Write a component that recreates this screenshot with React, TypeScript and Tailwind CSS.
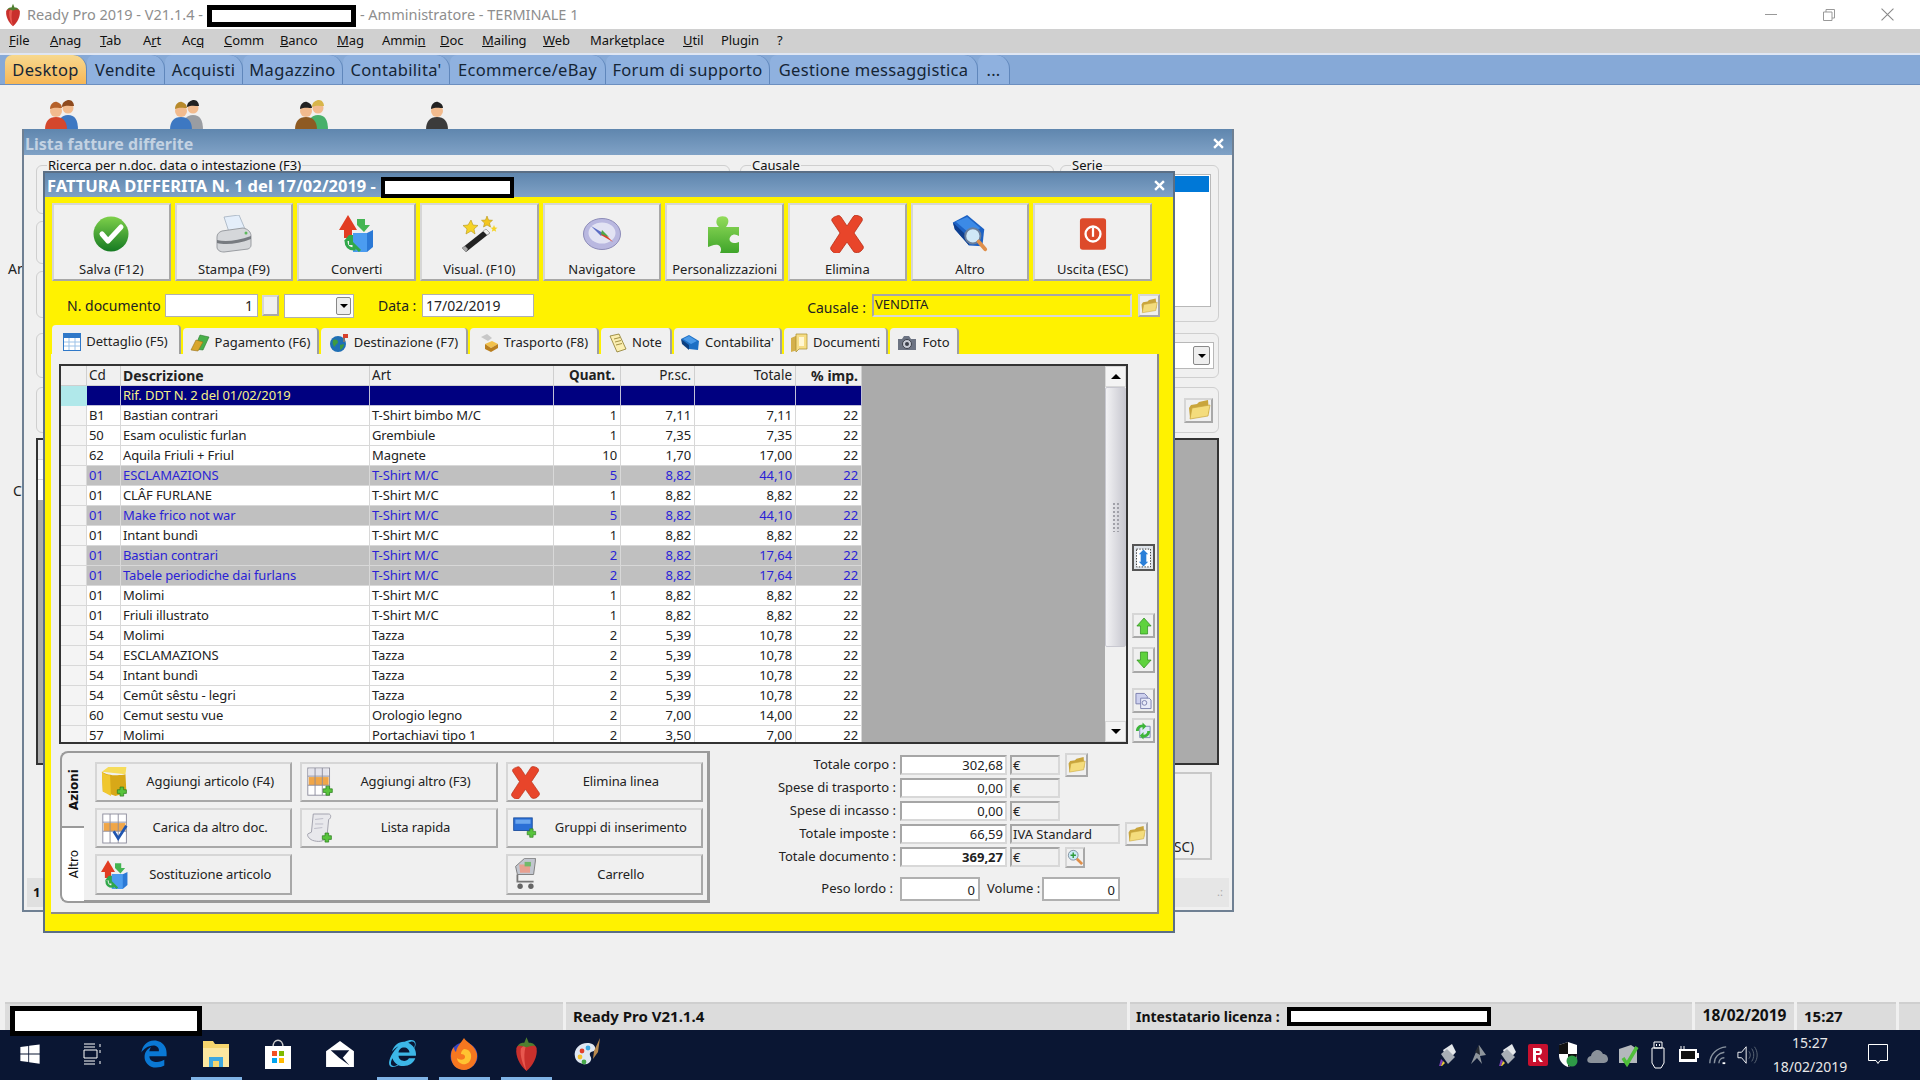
import type { ReactNode } from "react"
import { FaEdgeLegacy, FaInternetExplorer, FaWindows } from "react-icons/fa"

const raised = "border-2 border-t-[#d6d6d6] border-l-[#d6d6d6] border-r-[#a8a8a8] border-b-[#a8a8a8] bg-[#f0f0f0]"
const sunken = "border-2 border-t-[#a6a6a6] border-l-[#a6a6a6] border-r-[#d8d8d8] border-b-[#d8d8d8]"

/* ---------- icons ---------- */

function Strawberry({ className }: { className: string }) {
  return (
    <svg viewBox="0 0 24 32" className={className}>
      <path d="M12 31C6 26 2 18 3 11c.5-3 4-4 9-4s8.500 1 9 4c1 7-3 15-9 20z" fill="#c9302c" />
      <path d="M12 31C9 26 6 18 7 11c2-2 3-3 5-4-3 8-2 16 0 24z" fill="#e8584f" />
      <path d="M4 9c2-3 4-3 6-3l2-5 2 5c2 0 4 0 6 3-3-1-5 0-8 1-3-1-5-2-8-1z" fill="#4f7f2f" />
    </svg>
  )
}

function Folder({ className = "w-[24px] h-[22px]" }: { className?: string }) {
  return (
    <svg viewBox="0 0 24 22" className={className}>
      <path d="M3 19 2 9l2-3 6-1 2-2 9-2 1 13z" fill="#c9a53c" />
      <path d="M3 20 5 9l18-3-2 11z" fill="#f4dc7c" stroke="#c9a53c" strokeWidth=".7" />
    </svg>
  )
}

function PlusBadge({ x, y }: { x: number; y: number }) {
  return (
    <path
      transform={`translate(${x} ${y})`}
      d="M3 0h4v3h3v4H7v3H3V7H0V3h3z"
      fill="#58c43c"
      stroke="#2b7d1e"
      strokeWidth=".8"
    />
  )
}

function CheckCircle() {
  return (
    <svg viewBox="0 0 36 36" className="w-[36px] h-[36px]">
      <defs>
        <linearGradient id="chk" x1="0" y1="0" x2="0" y2="1">
          <stop offset="0" stopColor="#7ed04a" />
          <stop offset="1" stopColor="#157a22" />
        </linearGradient>
      </defs>
      <circle cx="18" cy="18" r="17.500" fill="url(#chk)" />
      <path d="m9 18 6 7L28 11" fill="none" stroke="#fff" strokeWidth="5" strokeLinecap="round" strokeLinejoin="round" />
    </svg>
  )
}

function Printer() {
  return (
    <svg viewBox="0 0 38 38" className="w-[38px] h-[38px]">
      <path d="M9 2 24 0l6 14-16 3z" fill="#e4eefa" stroke="#9aa8b8" strokeWidth=".7" />
      <path d="M2 22c0-3 2-5 5-6l21-3c5 1 8 4 8 8v9c0 2-1 3-3 4l-24 3c-4 0-7-2-7-5z" fill="#d5d7da" stroke="#9a9da2" />
      <path d="M2 25c8 2 20 1 34-4v3C24 29 10 30 2 28z" fill="#777b80" />
      <circle cx="31" cy="18" r="1.500" fill="#5cb85c" />
    </svg>
  )
}

function Convert({ small }: { small?: boolean }) {
  return (
    <svg viewBox="0 0 36 38" className={small ? "w-[28px] h-[30px]" : "w-[36px] h-[38px]"}>
      <path d="M9 0 18 15h-5v8H5v-8H0z" fill="#e23d22" />
      <path d="M15 30h-5v-4h-5l5-6 8 0z" fill="#31a84a" />
      <path d="M18 4h8v6h5l-6 7-7-7h0z" fill="#44b552" />
      <path d="M14 18h14l6-3v17l-6 5H14z" fill="#2b79d6" />
      <path d="M14 18h14v19H14z" fill="#4b9cf0" />
      <path d="M7 26c0 5 3 8 8 8v-4l6 6" fill="none" stroke="#30a84a" strokeWidth="3" />
    </svg>
  )
}

function Wand() {
  return (
    <svg viewBox="0 0 38 38" className="w-[38px] h-[38px]">
      <path d="M2 33 26 14l4 4L6 37z" fill="#222" />
      <path d="m23 16 3-2 4 4-3 2z" fill="#eee" stroke="#999" strokeWidth=".5" />
      <path d="M2 33l3-2 3 3-2 3z" fill="#aaa" />
      <path d="m11 5 2 5 5 .5-4 3.500 1 5-4-3-5 3 1-5-4-3.500 5-.5z" fill="#f5d327" stroke="#b5951a" strokeWidth=".6" />
      <path d="m27 1 1.500 4 4 .3-3 2.700 1 4-3.500-2-3.500 2 1-4-3-2.700 4-.3z" fill="#f3c51e" stroke="#b5951a" strokeWidth=".6" />
      <path d="m34 10 1 2.500 2.500.2-2 1.600.7 2.500-2.200-1.400-2.200 1.400.7-2.500-2-1.600 2.500-.2z" fill="#f5d327" />
    </svg>
  )
}

function Compass() {
  return (
    <svg viewBox="0 0 38 32" className="w-[38px] h-[32px]">
      <ellipse cx="19" cy="16" rx="18.500" ry="15.500" fill="#b9b8e0" stroke="#8d8cb8" />
      <ellipse cx="19" cy="15" rx="13.500" ry="10.500" fill="#e2e3f3" />
      <path d="m8 8 12 7-2 3z" fill="#5b6cc4" />
      <path d="m20 14 10 10-12-7z" fill="#d8402c" />
      <path d="m19 12 7 7-8-3z" fill="#4ea84a" />
    </svg>
  )
}

function Puzzle() {
  return (
    <svg viewBox="0 0 34 38" className="w-[34px] h-[38px]">
      <defs>
        <linearGradient id="pz" x1="0" y1="0" x2="0" y2="1">
          <stop offset="0" stopColor="#93dc5a" />
          <stop offset="1" stopColor="#3fa52a" />
        </linearGradient>
      </defs>
      <path
        d="M0 12h11c-3-3-3-5-2-8 1-3 9-4 11 0 1 3 0 5-2 8h13v9c-3-2-6-2-8 0-3 3-1 7 3 7 2 0 4-.500 5-1v9c0 1-1 2-2 2H12c2-3 1-7-2-8-4-1-8 2-10 2z"
        fill="url(#pz)"
      />
    </svg>
  )
}

function RedX({ className = "w-[34px] h-[38px]" }: { className?: string }) {
  return (
    <svg viewBox="0 0 34 38" className={className}>
      <path
        d="M7 1c2-1 3 0 4 1l6 9 6-9c1-2 3-2 6-1 3 1 4 3 3 5l-8 12 9 13c1 2 0 3-2 5s-5 2-7 1l-7-10-7 10c-1 2-4 2-7 0-2-2-3-3-2-5l9-14-8-12C1 4 3 2 7 1z"
        fill="#e8452a"
        stroke="#b92f16"
        strokeWidth=".8"
      />
    </svg>
  )
}

function BookSearch() {
  return (
    <svg viewBox="0 0 38 40" className="w-[38px] h-[38px]">
      <path d="M1 8 16 0l18 15-2 18-14-1L3 15z" fill="#1d62c4" />
      <path d="M1 8 18 24v8L3 15z" fill="#0f3f8f" />
      <path d="M4 7 16 2l14 12-12 5z" fill="#3c8ae6" />
      <circle cx="22" cy="22" r="8" fill="#cfe8f7" stroke="#6b7f9c" strokeWidth="2" />
      <path d="m28 28 7 8" stroke="#e08f4a" strokeWidth="4" strokeLinecap="round" />
    </svg>
  )
}

function PowerBtn() {
  return (
    <svg viewBox="0 0 30 36" className="w-[28px] h-[34px]">
      <rect x="1" y="1" width="28" height="34" rx="3" fill="#dd4a2a" />
      <circle cx="15" cy="18" r="8" fill="none" stroke="#fff" strokeWidth="2.500" />
      <rect x="13.800" y="11" width="2.400" height="10" fill="#fff" />
    </svg>
  )
}

function TableIcon() {
  return (
    <svg viewBox="0 0 18 18" className="w-[18px] h-[18px]">
      <rect x=".5" y=".5" width="17" height="17" fill="#fff" stroke="#2f78c8" />
      <rect x="1" y="1" width="16" height="4" fill="#2f78c8" />
      <path d="M1 9h16M1 13h16M6 5v12M12 5v12" stroke="#9cc2e8" />
    </svg>
  )
}

function MoneyIcon() {
  return (
    <svg viewBox="0 0 20 20" className="w-[20px] h-[20px]">
      <path d="M4 16 10 2l9 2-6 13z" fill="#49b04a" stroke="#2a7a2e" strokeWidth=".6" />
      <path d="M1 17 6 7l7 2-5 9z" fill="#d8a62c" stroke="#97701a" strokeWidth=".6" />
    </svg>
  )
}

function GlobeIcon() {
  return (
    <svg viewBox="0 0 20 20" className="w-[20px] h-[20px]">
      <circle cx="9" cy="11" r="8" fill="#1f6fb5" />
      <path d="M4 7c3-1 5 0 5 2s-3 2-3 5c-2-1-3-4-2-7zM11 12l4-1c0 3-2 5-4 6z" fill="#3e9a42" />
      <path d="M14 1h2v8h-2z" fill="#777" />
      <path d="M14 1h5v4h-5z" fill="#d8402c" />
    </svg>
  )
}

function ParcelIcon() {
  return (
    <svg viewBox="0 0 20 20" className="w-[20px] h-[20px]">
      <path d="M2 4 8 1l5 4-4 3z" fill="#c8c8c8" />
      <path d="M6 11 13 8l6 3-7 4z" fill="#f2c14a" />
      <path d="m6 11 6 4v4l-6-3zM12 15l7-4v4l-7 4z" fill="#b97e1e" />
    </svg>
  )
}

function NoteIcon() {
  return (
    <svg viewBox="0 0 18 20" className="w-[18px] h-[20px]">
      <path d="M1 3 10 1l7 15-9 3z" fill="#fbeeb0" stroke="#8c7a2a" strokeWidth=".8" />
      <path d="m5 6 6-1.500M6 9l6-1.500M7 12l6-1.500" stroke="#8c7a2a" strokeWidth=".8" />
    </svg>
  )
}

function BookIcon() {
  return (
    <svg viewBox="0 0 20 18" className="w-[20px] h-[18px]">
      <path d="M1 5 9 1l10 6-1 9-9-1z" fill="#1c6fc4" />
      <path d="M1 5 9 11v5L2 10z" fill="#0c3f80" />
      <path d="m3 5 6-3 8 5-6 3z" fill="#4a9ae8" />
    </svg>
  )
}

function DocsIcon() {
  return (
    <svg viewBox="0 0 18 20" className="w-[18px] h-[20px]">
      <path d="M1 5 8 2v15l-7 2z" fill="#d4b04a" />
      <path d="M6 1h11v15H9l-3 3z" fill="#f6dd85" stroke="#a68a2a" strokeWidth=".7" />
      <path d="M9 4h5v9H9z" fill="#fff7d4" />
    </svg>
  )
}

function CameraIcon() {
  return (
    <svg viewBox="0 0 20 18" className="w-[20px] h-[18px]">
      <path d="M1 5h4l2-3h5l2 3h5v11H1z" fill="#6c7382" />
      <circle cx="10" cy="10" r="4.500" fill="#c8ccd6" stroke="#3c404a" />
      <circle cx="10" cy="10" r="2" fill="#3c404a" />
    </svg>
  )
}

function BoxPlus() {
  return (
    <svg viewBox="0 0 32 36" className="w-[29px] h-[33px]">
      <path d="M1 6 8 1l20 0-1 8z" fill="#f6dc5a" />
      <path d="M1 6c5 4 18 5 26 3l1 20-12 4-14-5z" fill="#d8a818" />
      <path d="M1 6c3 3 6 4 9 4l1 23-9-5z" fill="#f0c72e" />
      <PlusBadge x={18} y={23} />
    </svg>
  )
}

function GridPlus() {
  return (
    <svg viewBox="0 0 32 36" className="w-[29px] h-[33px]">
      <rect x="2" y="2" width="24" height="30" fill="#fff" stroke="#8a8a9a" />
      <rect x="3" y="3" width="22" height="8" fill="#e4e4ec" />
      <rect x="3" y="12" width="22" height="9" fill="#f0a648" />
      <path d="M10 2v30M18 2v30M2 11h24M2 21h24" stroke="#8a8a9a" />
      <PlusBadge x={19} y={22} />
    </svg>
  )
}

function GridCheck() {
  return (
    <svg viewBox="0 0 32 36" className="w-[29px] h-[33px]">
      <rect x="2" y="2" width="26" height="32" fill="#fff" stroke="#8a8a9a" />
      <rect x="3" y="12" width="24" height="9" fill="#f0a648" />
      <path d="M10 2v32M19 2v32M2 11h26M2 21h26" stroke="#8a8a9a" />
      <path d="m14 21 5 8 9-14" fill="none" stroke="#1f55b0" strokeWidth="3" />
    </svg>
  )
}

function ScrollPlus() {
  return (
    <svg viewBox="0 0 32 36" className="w-[29px] h-[33px]">
      <path d="M8 2h17c3 0 3 5 0 6l-2 20c-4 5-10 5-16 3-4-2-6-5-5-7l4-2z" fill="#e8e8ec" stroke="#9c9ca8" />
      <path d="m10 8 9-1M10 13h9M9 18l9-1" stroke="#b8b8c4" />
      <PlusBadge x={18} y={23} />
    </svg>
  )
}

function BluePlus() {
  return (
    <svg viewBox="0 0 32 28" className="w-[27px] h-[24px]">
      <rect x="2" y="2" width="22" height="15" fill="#2b6fd6" stroke="#174a9a" />
      <rect x="4" y="4" width="18" height="5" fill="#6ba6ee" />
      <PlusBadge x={18} y={15} />
    </svg>
  )
}

function Cart() {
  return (
    <svg viewBox="0 0 30 36" className="w-[27px] h-[33px]">
      <path d="M14 0h12v3l-2 15H6L4 9z" fill="#c2c6cf" stroke="#777" />
      <path d="M8 7h12v9H9z" fill="#e8a090" />
      <path d="M14 4h7v5h-7z" fill="#71b96a" />
      <path d="M6 18v8h18" fill="none" stroke="#777" strokeWidth="2" />
      <circle cx="9" cy="31" r="3" fill="#666" />
      <circle cx="21" cy="31" r="3" fill="#666" />
    </svg>
  )
}

function ArrowV({ up }: { up?: boolean }) {
  return (
    <svg viewBox="0 0 18 20" className={up ? "w-[16px] h-[18px]" : "w-[16px] h-[18px] rotate-180"}>
      <path d="M9 1 17 10h-4v9H5v-9H1z" fill="#5fd23e" stroke="#2d8c1e" strokeWidth=".8" />
    </svg>
  )
}

/* ---------- window parts ---------- */

function Redact({ className }: { className: string }) {
  return <div className={`shrink-0 bg-white border-black ${className}`} />
}

function GroupBox({ label, className, children }: { label?: string; className: string; children?: ReactNode }) {
  return (
    <div className={`rounded-[6px] border border-[#cfcfcf] ${className}`}>
      {label && <div className="-mt-[8px] ml-[10px] w-fit bg-[#f0f0f0] px-[1px] text-[13px] leading-[14px] text-[#111]">{label}</div>}
      {children}
    </div>
  )
}

function CloseX() {
  return (
    <svg viewBox="0 0 10 10" className="h-[11px] w-[11px]">
      <path d="m1 1 8 8M9 1 1 9" stroke="#fff" strokeWidth="2.200" />
    </svg>
  )
}

const toolbar: { label: string; icon: ReactNode }[] = [
  { label: "Salva (F12)", icon: <CheckCircle /> },
  { label: "Stampa (F9)", icon: <Printer /> },
  { label: "Converti", icon: <Convert /> },
  { label: "Visual. (F10)", icon: <Wand /> },
  { label: "Navigatore", icon: <Compass /> },
  { label: "Personalizzazioni", icon: <Puzzle /> },
  { label: "Elimina", icon: <RedX /> },
  { label: "Altro", icon: <BookSearch /> },
  { label: "Uscita (ESC)", icon: <PowerBtn /> },
]

const docTabs: { label: string; w: string; icon: ReactNode; active?: boolean }[] = [
  { label: "Dettaglio (F5)", w: "w-[129px]", icon: <TableIcon />, active: true },
  { label: "Pagamento (F6)", w: "w-[136px]", icon: <MoneyIcon /> },
  { label: "Destinazione (F7)", w: "w-[147px]", icon: <GlobeIcon /> },
  { label: "Trasporto (F8)", w: "w-[129px]", icon: <ParcelIcon /> },
  { label: "Note", w: "w-[71px]", icon: <NoteIcon /> },
  { label: "Contabilita'", w: "w-[108px]", icon: <BookIcon /> },
  { label: "Documenti", w: "w-[104px]", icon: <DocsIcon /> },
  { label: "Foto", w: "w-[69px]", icon: <CameraIcon /> },
]

type Row = [string, string, string, string, string, string, string, 0 | 1]

const rows: Row[] = [
  ["B1", "Bastian contrari", "T-Shirt bimbo M/C", "1", "7,11", "7,11", "22", 0],
  ["50", "Esam oculistic furlan", "Grembiule", "1", "7,35", "7,35", "22", 0],
  ["62", "Aquila Friuli + Friul", "Magnete", "10", "1,70", "17,00", "22", 0],
  ["01", "ESCLAMAZIONS", "T-Shirt M/C", "5", "8,82", "44,10", "22", 1],
  ["01", "CLÂF FURLANE", "T-Shirt M/C", "1", "8,82", "8,82", "22", 0],
  ["01", "Make frico not war", "T-Shirt M/C", "5", "8,82", "44,10", "22", 1],
  ["01", "Intant bundì", "T-Shirt M/C", "1", "8,82", "8,82", "22", 0],
  ["01", "Bastian contrari", "T-Shirt M/C", "2", "8,82", "17,64", "22", 1],
  ["01", "Tabele periodiche dai furlans", "T-Shirt M/C", "2", "8,82", "17,64", "22", 1],
  ["01", "Molimi", "T-Shirt M/C", "1", "8,82", "8,82", "22", 0],
  ["01", "Friuli illustrato", "T-Shirt M/C", "1", "8,82", "8,82", "22", 0],
  ["54", "Molimi", "Tazza", "2", "5,39", "10,78", "22", 0],
  ["54", "ESCLAMAZIONS", "Tazza", "2", "5,39", "10,78", "22", 0],
  ["54", "Intant bundì", "Tazza", "2", "5,39", "10,78", "22", 0],
  ["54", "Cemût sêstu - legri", "Tazza", "2", "5,39", "10,78", "22", 0],
  ["60", "Cemut sestu vue", "Orologio legno", "2", "7,00", "14,00", "22", 0],
  ["57", "Molimi", "Portachiavi tipo 1", "2", "3,50", "7,00", "22", 0],
]

const cols = "grid h-[20px] grid-cols-[26px_34px_249px_184px_67px_74px_101px_66px] leading-[19px]"
const bodyText = "text-[13px] tracking-[-0.1px]"

function Cell({ children, right, className = "" }: { children?: ReactNode; right?: boolean; className?: string }) {
  return (
    <div className={`overflow-hidden whitespace-nowrap border-b border-r pl-[2px] pr-[3px] ${right ? "text-right" : ""} ${className}`}>
      {children}
    </div>
  )
}

function Grid() {
  return (
    <div className="flex h-[380px] w-[1069px] overflow-hidden border-2 border-[#333] bg-[#ababab]">
      <div className="w-[801px] shrink-0">
        <div className={`${cols} bg-[#f0f0f0] text-[13.500px] text-[#222]`}>
          <Cell className="border-[#cfcfcf]" />
          <Cell className="border-[#cfcfcf]">Cd</Cell>
          <Cell className="border-[#cfcfcf] text-[14px] font-bold">Descrizione</Cell>
          <Cell className="border-[#cfcfcf]">Art</Cell>
          <Cell right className="border-[#cfcfcf] pr-[5px] font-bold">Quant.</Cell>
          <Cell right className="border-[#cfcfcf]">Pr.sc.</Cell>
          <Cell right className="border-[#cfcfcf]">Totale</Cell>
          <Cell right className="border-[#cfcfcf] text-[14px] font-bold">% imp.</Cell>
        </div>
        <div className={`${cols} ${bodyText} bg-[#000080] text-[#f6f08a]`}>
          <Cell className="border-[#b0e8ea] bg-[#b0e8ea]" />
          <Cell className="border-[#c0c0d8]" />
          <Cell className="border-[#c0c0d8]">Rif. DDT N. 2 del 01/02/2019</Cell>
          <Cell className="border-[#c0c0d8]" />
          <Cell className="border-[#c0c0d8]" />
          <Cell className="border-[#c0c0d8]" />
          <Cell className="border-[#c0c0d8]" />
          <Cell className="border-[#c0c0d8]" />
        </div>
        {rows.map((r, i) => (
          <div key={i} className={`${cols} ${bodyText} ${r[7] ? "bg-[#c0c0c0] text-[#2a1fd6]" : "bg-white text-[#222]"}`}>
            <Cell className="border-[#d8d8d8] bg-[#f4f4f4]" />
            <Cell className="border-[#d8d8d8]">{r[0]}</Cell>
            <Cell className="border-[#d8d8d8]">{r[1]}</Cell>
            <Cell className="border-[#d8d8d8]">{r[2]}</Cell>
            <Cell right className="border-[#d8d8d8]">{r[3]}</Cell>
            <Cell right className="border-[#d8d8d8]">{r[4]}</Cell>
            <Cell right className="border-[#d8d8d8]">{r[5]}</Cell>
            <Cell right className="border-[#d8d8d8]">{r[6]}</Cell>
          </div>
        ))}
      </div>
      <div className="flex-1" />
      <div className="flex w-[21px] shrink-0 flex-col bg-[#f0f0f0]">
        <div className="flex h-[21px] items-center justify-center border border-[#d8d8d8] bg-[#f4f4f4]">
          <div className="h-0 w-0 border-x-[5px] border-b-[5px] border-x-transparent border-b-black" />
        </div>
        <div className="flex h-[260px] flex-col items-center justify-center rounded-[2px] border border-[#c8c8d0] bg-gradient-to-r from-[#f2f2f4] to-[#c8c8d0]">
          <div className="h-[30px] w-[8px] bg-[radial-gradient(#a0a0a8_1px,transparent_1px)] bg-[length:4px_4px]" />
        </div>
        <div className="flex-1" />
        <div className="flex h-[21px] items-center justify-center border border-[#d8d8d8] bg-[#f4f4f4]">
          <div className="h-0 w-0 border-x-[5px] border-t-[5px] border-x-transparent border-t-black" />
        </div>
      </div>
    </div>
  )
}

function SideBtn({ className, children }: { className: string; children: ReactNode }) {
  return <div className={`flex w-[23px] items-center justify-center ${className}`}>{children}</div>
}

function SideButtons() {
  return (
    <div className="ml-[4px] flex flex-col">
      <SideBtn className="mt-[180px] h-[27px] border-2 border-[#555] bg-[#dfe4ea]">
        <svg viewBox="0 0 16 20" className="h-[20px] w-[15px]">
          <rect x=".5" y=".5" width="15" height="19" fill="#fff" stroke="#333" strokeDasharray="1.500 1.500" />
          <path d="M8 1 13 6h-2v8h2l-5 5-5-5h2V6H3z" fill="#2a7fd8" />
        </svg>
      </SideBtn>
      <SideBtn className={`mt-[42px] h-[25px] ${raised}`}><ArrowV up /></SideBtn>
      <SideBtn className={`mt-[9px] h-[26px] ${raised}`}><ArrowV /></SideBtn>
      <SideBtn className={`mt-[15px] h-[25px] ${raised}`}>
        <svg viewBox="0 0 18 18" className="h-[18px] w-[17px]">
          <path d="M1 1h9l3 3v8H1z" fill="#cdd0ee" stroke="#7a7fae" />
          <path d="M6 6h9l2 2v9H6z" fill="#e9ebf8" stroke="#7a7fae" />
          <circle cx="10" cy="11" r="2.500" fill="none" stroke="#7a7fae" />
        </svg>
      </SideBtn>
      <SideBtn className={`mt-[5px] h-[25px] ${raised}`}>
        <svg viewBox="0 0 18 18" className="h-[18px] w-[17px]">
          <path d="M5 4h11v12H5z" fill="#dfe8f8" stroke="#7a8ab0" />
          <path d="M1 9c0-4 3-7 7-7V0l4 4-4 4V5C5 5 4 7 4 9z" fill="#3cb53a" />
          <path d="M16 9c0 4-3 7-7 7v2l-4-4 4-4v3c3 0 4-2 4-4z" fill="#3cb53a" />
        </svg>
      </SideBtn>
    </div>
  )
}

const actions: { label: string; icon: ReactNode }[] = [
  { label: "Aggiungi articolo (F4)", icon: <BoxPlus /> },
  { label: "Aggiungi altro (F3)", icon: <GridPlus /> },
  { label: "Elimina linea", icon: <RedX className="h-[33px] w-[29px]" /> },
  { label: "Carica da altro doc.", icon: <GridCheck /> },
  { label: "Lista rapida", icon: <ScrollPlus /> },
  { label: "Gruppi di inserimento", icon: <BluePlus /> },
  { label: "Sostituzione articolo", icon: <Convert small /> },
  { label: "", icon: null },
  { label: "Carrello", icon: <Cart /> },
]

function ActionPanel() {
  return (
    <div className="flex h-[152px] w-[650px] shrink-0">
      <div className="flex w-[24px] shrink-0 flex-col font-['DejaVu_Sans',sans-serif] text-[12px] text-[#111]">
        <div className="flex h-[75px] items-center justify-center rounded-tl-[8px] border-l-2 border-t-2 border-[#9a9a9a] bg-[#f0f0f0] pl-[2px] font-bold [writing-mode:vertical-rl]">
          <span className="rotate-180">Azioni</span>
        </div>
        <div className="flex h-[77px] items-center justify-center rounded-bl-[8px] border-2 border-r-0 border-[#9a9a9a] bg-white pl-[2px] [writing-mode:vertical-rl]">
          <span className="rotate-180">Altro</span>
        </div>
      </div>
      <div className="flex-1 border-b-[3px] border-r-[3px] border-t-2 border-[#9a9a9a] pl-[11px] pt-[9px]">
        <div className="grid w-[608px] grid-cols-3 grid-rows-[40px_40px_41px] gap-x-[8px] gap-y-[6px]">
          {actions.map((a, i) =>
            a.label ? (
              <div key={i} className={`flex items-center pl-[3px] text-[13px] tracking-[-0.1px] text-[#222] ${raised}`}>
                <div className="flex w-[30px] shrink-0 justify-center">{a.icon}</div>
                <div className="flex-1 text-center">{a.label}</div>
              </div>
            ) : (
              <div key={i} />
            ),
          )}
        </div>
      </div>
    </div>
  )
}

function TotalRow({ label, value, unit, bold, wide, className, children }: {
  label: string
  value: string
  unit: string
  bold?: boolean
  wide?: boolean
  className: string
  children?: ReactNode
}) {
  return (
    <div className={`flex h-[20px] items-center text-[13px] text-[#222] ${className}`}>
      <div className="w-[186px] text-right">{label}</div>
      <div className={`ml-[4px] h-[20px] w-[107px] bg-white pr-[2px] text-right leading-[16px] ${sunken} ${bold ? "font-bold" : ""}`}>{value}</div>
      <div className={`ml-[3px] h-[20px] ${wide ? "w-[110px]" : "w-[50px]"} pl-[1px] leading-[16px] ${sunken}`}>{unit}</div>
      {children}
    </div>
  )
}

function Totals() {
  return (
    <div className="flex flex-col pt-[4px]">
      <TotalRow label="Totale corpo :" value="302,68" unit="€" className="">
        <div className={`ml-[5px] flex h-[24px] w-[23px] items-center justify-center ${raised}`}><Folder /></div>
      </TotalRow>
      <TotalRow label="Spese di trasporto :" value="0,00" unit="€" className="mt-[3px]" />
      <TotalRow label="Spese di incasso :" value="0,00" unit="€" className="mt-[3px]" />
      <TotalRow label="Totale imposte :" value="66,59" unit="IVA Standard" wide className="mt-[3px]">
        <div className={`ml-[5px] flex h-[24px] w-[23px] items-center justify-center ${raised}`}><Folder /></div>
      </TotalRow>
      <TotalRow label="Totale documento :" value="369,27" unit="€" bold className="mt-[3px]">
        <div className={`ml-[5px] flex h-[21px] w-[20px] items-center justify-center ${raised}`}>
          <svg viewBox="0 0 18 18" className="h-[16px] w-[16px]">
            <circle cx="7" cy="7" r="5.500" fill="#cdeaf6" stroke="#7b8a9a" />
            <path d="M7 4v6M4 7h6" stroke="#2f9a3a" strokeWidth="1.600" />
            <path d="m11 11 6 6" stroke="#e08f4a" strokeWidth="3" />
          </svg>
        </div>
      </TotalRow>
      <div className="mt-[10px] flex h-[24px] items-center text-[13px] text-[#222]">
        <div className="w-[183px] text-right">Peso lordo :</div>
        <div className="ml-[7px] h-[24px] w-[80px] border-2 border-[#b0b0b0] bg-white pr-[3px] text-right leading-[22px]">0</div>
        <div className="ml-[7px] w-[52px] whitespace-nowrap">Volume :</div>
        <div className="ml-[3px] h-[24px] w-[78px] border-2 border-[#b0b0b0] bg-white pr-[3px] text-right leading-[22px]">0</div>
      </div>
    </div>
  )
}

function InvoiceWindow() {
  return (
    <div className="absolute left-[43px] top-[86px] flex h-[762px] w-[1132px] flex-col border-2 border-[#5b6f85] bg-[#fff200]">
      <div className="flex h-[24px] shrink-0 items-center justify-between bg-gradient-to-b from-[#5f86ae] to-[#80a2c6] pr-[8px]">
        <div className="flex items-center">
          <div className="whitespace-nowrap pl-[2px] pt-[3px] text-[16.500px] font-bold text-white">FATTURA DIFFERITA N. 1 del 17/02/2019 -</div>
          <Redact className="ml-[5px] mt-[4px] h-[21px] w-[133px] border-[4px]" />
        </div>
        <CloseX />
      </div>

      <div className="flex flex-1 flex-col pl-[7px] pt-[6px]">
        {/* Toolbar */}
        <div className="grid h-[78px] w-[1100px] shrink-0 grid-cols-9 gap-x-[4px]">
          {toolbar.map((b) => (
            <div key={b.label} className={`flex flex-col items-center text-[13px] text-[#222] ${raised}`}>
              <div className="flex h-[49px] items-center justify-center pt-[8px]">{b.icon}</div>
              <div className="mt-[7px] whitespace-nowrap leading-[16px]">{b.label}</div>
            </div>
          ))}
        </div>

        {/* Document row */}
        <div className="mt-[13px] flex h-[23px] w-[1108px] shrink-0 items-center text-[14px] text-[#222]">
          <div className="ml-[15px] w-[98px] whitespace-nowrap">N. documento :</div>
          <div className="h-[23px] w-[93px] border border-[#b0b0b0] bg-white pr-[4px] text-right leading-[21px]">1</div>
          <div className={`ml-[4px] h-[21px] w-[17px] ${raised}`} />
          <div className="ml-[5px] flex h-[24px] w-[70px] items-center justify-end border border-[#b0b0b0] bg-white pr-[2px]">
            <div className="flex h-[18px] w-[15px] items-center justify-center rounded-[2px] border border-[#888] bg-[#eee]">
              <div className="h-0 w-0 border-x-[4px] border-t-[4px] border-x-transparent border-t-black" />
            </div>
          </div>
          <div className="ml-[24px] w-[44px] whitespace-nowrap">Data :</div>
          <div className="h-[23px] w-[112px] border border-[#b0b0b0] bg-white pl-[3px] leading-[21px]">17/02/2019</div>
          <div className="ml-auto mt-[3px] whitespace-nowrap">Causale :</div>
          <div className={`ml-[6px] h-[23px] w-[260px] pl-[1px] text-[13px] leading-[17px] ${sunken}`}>VENDITA</div>
          <div className={`ml-[6px] flex h-[23px] w-[22px] items-center justify-center ${raised}`}><Folder /></div>
        </div>

        {/* Tabs */}
        <div className="mt-[8px] flex h-[29px] shrink-0 items-end gap-x-[2px]">
          {docTabs.map((t) => (
            <div
              key={t.label}
              className={`flex items-center justify-center gap-x-[5px] whitespace-nowrap rounded-t-[4px] border-r-2 border-[#a0a0a0] bg-[#f0f0f0] text-[13px] text-[#222] ${t.w} ${t.active ? "h-[29px] pt-[5px]" : "h-[26px] pt-[3px]"}`}
            >
              {t.icon}
              {t.label}
            </div>
          ))}
        </div>

        {/* Tab panel */}
        <div className="-ml-[1px] flex h-[560px] w-[1108px] shrink-0 flex-col border-b-2 border-r-2 border-[#8c8c8c] bg-[#f0f0f0] pl-[8px] pt-[10px]">
          <div className="flex">
            <Grid />
            <SideButtons />
          </div>
          <div className="mt-[7px] flex">
            <div className="ml-[1px]"><ActionPanel /></div>
            <Totals />
          </div>
        </div>
      </div>
    </div>
  )
}

function ListWindow() {
  return (
    <div className="absolute left-[22px] top-[44px] flex h-[783px] w-[1212px] flex-col border-2 border-t-0 border-[#6f8093] bg-[#f0f0f0]">
      <div className="flex h-[26px] shrink-0 items-center justify-between bg-gradient-to-b from-[#5f86ae] to-[#80a2c6] pl-[1px] pr-[8px] pt-[3px]">
        <div className="text-[16px] font-bold text-[#c3d2e2]">Lista fatture differite</div>
        <CloseX />
      </div>
      <div className="flex flex-1 flex-col pl-[12px] pr-[13px] pt-[10px]">
        <div className="flex h-[157px] shrink-0">
          <div className="flex w-[694px] flex-col gap-y-[7px]">
            <GroupBox label="Ricerca per n.doc. data o intestazione (F3)" className="h-[49px]" />
            <GroupBox className="h-[43px]" />
            <GroupBox className="h-[47px]" />
          </div>
          <GroupBox label="Causale" className="ml-[10px] w-[314px]" />
          <GroupBox label="Serie" className="ml-[6px] flex-1">
            <div className="ml-[8px] mr-[7px] mt-[2px] h-[133px] border border-[#b8b8b8] bg-white p-[1px]">
              <div className="h-[16px] bg-[#0078d7]" />
            </div>
          </GroupBox>
        </div>
        <GroupBox className="mt-[11px] flex h-[45px] shrink-0 items-center justify-end pr-[4px]">
          <div className="flex h-[27px] w-[48px] items-center justify-end border border-[#b8b8b8] bg-white pr-[3px]">
            <div className="flex h-[19px] w-[17px] items-center justify-center rounded-[2px] border border-[#888] bg-[#eee]">
              <div className="h-0 w-0 border-x-[4px] border-t-[4px] border-x-transparent border-t-black" />
            </div>
          </div>
        </GroupBox>
        <GroupBox className="mt-[9px] flex h-[46px] shrink-0 items-center justify-end pr-[5px]">
          <div className={`flex h-[25px] w-[29px] items-center justify-center ${raised}`}><Folder /></div>
        </GroupBox>
        <div className="mt-[5px] h-[327px] shrink-0 border-2 border-[#333] bg-[#ababab]">
          <div className="h-[20px] w-[100px] border-b border-[#d8d8d8] bg-[#f0f0f0]" />
          <div className="h-[20px] w-[100px] border-b border-[#d8d8d8] bg-white" />
          <div className="h-[20px] w-[100px] bg-white" />
        </div>
        <div className="ml-auto mr-[7px] mt-[7px] flex h-[88px] w-[140px] shrink-0 items-end justify-end border-2 border-[#c8c8c8] pb-[1px] pr-[16px] text-[13.500px] text-[#222]">
          Uscita (ESC)
        </div>
      </div>
      <div className="mb-[3px] flex h-[29px] shrink-0 items-center justify-between pl-[3px] pr-[3px]">
        <div className="flex h-[29px] w-[60px] items-center bg-[#e0e0e0] pl-[6px] text-[13px] font-bold text-[#111]">1</div>
        <div className="flex h-[29px] w-[60px] items-center justify-end bg-[#e6e6e6] pr-[6px] text-[11px] text-[#aaa]">.:</div>
      </div>
    </div>
  )
}

/* ---------- app frame ---------- */

const menu: { label: string; u: number; w: string }[] = [
  { label: "File", u: 0, w: "w-[41px]" },
  { label: "Anag", u: 0, w: "w-[50px]" },
  { label: "Tab", u: 0, w: "w-[43px]" },
  { label: "Art", u: 1, w: "w-[39px]" },
  { label: "Acq", u: 2, w: "w-[42px]" },
  { label: "Comm", u: 0, w: "w-[56px]" },
  { label: "Banco", u: 0, w: "w-[57px]" },
  { label: "Mag", u: 0, w: "w-[45px]" },
  { label: "Ammin", u: 4, w: "w-[58px]" },
  { label: "Doc", u: 0, w: "w-[42px]" },
  { label: "Mailing", u: 0, w: "w-[61px]" },
  { label: "Web", u: 0, w: "w-[47px]" },
  { label: "Marketplace", u: 4, w: "w-[93px]" },
  { label: "Util", u: 0, w: "w-[38px]" },
  { label: "Plugin", u: -1, w: "w-[56px]" },
  { label: "?", u: -1, w: "w-[20px]" },
]

const appTabs: { label: string; w: string }[] = [
  { label: "Desktop", w: "w-[82px]" },
  { label: "Vendite", w: "w-[78px]" },
  { label: "Acquisti", w: "w-[78px]" },
  { label: "Magazzino", w: "w-[100px]" },
  { label: "Contabilita'", w: "w-[107px]" },
  { label: "Ecommerce/eBay", w: "w-[156px]" },
  { label: "Forum di supporto", w: "w-[164px]" },
  { label: "Gestione messaggistica", w: "w-[208px]" },
  { label: "...", w: "w-[32px]" },
]

function People({ front, back, hair, hair2 }: { front: string; back?: string; hair: string; hair2?: string }) {
  return (
    <svg viewBox="0 0 38 30" className="h-[30px] w-[38px]">
      {back && (
        <g>
          <circle cx="25" cy="8" r="5.500" fill="#f2bb8e" />
          <path d="M19 7c0-5 4-7 7-7s5 3 5 6c-4 0-8-1-12 1z" fill={hair2} />
          <path d="M15 30c0-10 3-15 10-15s10 5 10 15z" fill={back} />
        </g>
      )}
      <circle cx="13" cy="11" r="6" fill="#f2bb8e" />
      <path d="M7 9c0-5 4-8 7-7s5 3 5 6c-3 0-8-1-12 1z" fill={hair} />
      <path d="M2 30c0-9 4-13 11-13s11 4 11 13z" fill={front} />
    </svg>
  )
}

function TitleBar() {
  return (
    <div className="flex h-[29px] shrink-0 items-center bg-white pl-[4px] text-[14.500px] text-[#8e8e8e]">
      <Strawberry className="h-[24px] w-[18px]" />
      <div className="ml-[5px] whitespace-nowrap">Ready Pro 2019 - V21.1.4 -</div>
      <Redact className="ml-[4px] mt-[3px] h-[22px] w-[149px] border-[5px]" />
      <div className="ml-[4px] whitespace-nowrap">- Amministratore - TERMINALE 1</div>
      <div className="ml-auto flex items-center">
        <div className="mr-[46px] h-[1px] w-[12px] bg-[#999]" />
        <svg viewBox="0 0 12 12" className="mr-[46px] h-[12px] w-[12px]">
          <path d="M.5 3h8.500v8.500H.5zM3 3V.5h8.500V9H9" fill="none" stroke="#999" />
        </svg>
        <svg viewBox="0 0 12 12" className="mr-[26px] h-[13px] w-[13px]">
          <path d="m.5.5 11 11m0-11-11 11" stroke="#888" />
        </svg>
      </div>
    </div>
  )
}

function MenuBar() {
  return (
    <div className="flex h-[24px] shrink-0 items-center bg-[#d0d0d0] pl-[9px] text-[13px] tracking-[-0.1px] text-[#111]">
      {menu.map((m) => (
        <div key={m.label} className={`shrink-0 ${m.w}`}>
          {m.u < 0 ? (
            m.label
          ) : (
            <>
              {m.label.slice(0, m.u)}
              <span className="underline">{m.label[m.u]}</span>
              {m.label.slice(m.u + 1)}
            </>
          )}
        </div>
      ))}
    </div>
  )
}

function TabBar() {
  return (
    <div className="flex h-[32px] shrink-0 items-end border-b border-t-2 border-b-[#6c8fc0] border-t-[#dfe6f3] bg-[#86a9d7] pl-[5px]">
      {appTabs.map((t) => (
        <div
          key={t.label}
          className={`flex h-[29px] items-center justify-center whitespace-nowrap rounded-tl-[7px] rounded-tr-[14px] border-r border-[#5f86bb] pt-[2px] text-[16.500px] tracking-[0.3px] text-[#152535] ${t.w} ${
            t.label === "Desktop" ? "bg-gradient-to-b from-[#f7d88e] to-[#f7b755]" : "bg-[#8fb1df]"
          }`}
        >
          {t.label}
        </div>
      ))}
    </div>
  )
}

function StatusBar() {
  const seg = "flex items-center h-full border-t-2 border-[#cfcfcf] bg-[#dcdcdc] pb-[2px] font-bold text-[#111]"
  return (
    <div className="flex h-[28px] shrink-0 gap-x-[3px] bg-[#f0f0f0] pl-[5px]">
      <div className={`${seg} w-[558px]`} />
      <div className={`${seg} w-[561px] pl-[7px] text-[15px]`}>Ready Pro V21.1.4</div>
      <div className={`${seg} w-[562px] pl-[6px] text-[14px]`}>
        Intestatario licenza :
        <Redact className="ml-[7px] h-[19px] w-[204px] border-[4px]" />
      </div>
      <div className={`${seg} w-[99px] justify-center text-[15.500px]`}>18/02/2019</div>
      <div className={`${seg} w-[99px] pl-[7px] text-[15px]`}>15:27</div>
      <div className={`${seg} flex-1`} />
    </div>
  )
}

const taskIcons: { icon: ReactNode; on?: boolean }[] = [
  { icon: <FaWindows className="h-[22px] w-[22px] text-white" /> },
  {
    icon: (
      <svg viewBox="0 0 22 22" className="h-[22px] w-[22px]">
        <path d="M3 1h11M3 4h11M3 7h13v8H3zM3 18h11M3 21h11M19 1v3M19 7v3M19 18v3" fill="none" stroke="#fff" />
      </svg>
    ),
  },
  { icon: <FaEdgeLegacy className="h-[30px] w-[28px] text-[#0a78d4]" /> },
  {
    on: true,
    icon: (
      <svg viewBox="0 0 28 30" className="h-[30px] w-[28px]">
        <path d="M1 2h10l2 3h14v23H1z" fill="#f6d56e" />
        <path d="M1 9h26v19H1z" fill="#fce7a0" />
        <path d="M7 18h14v10H7z" fill="#3ea8e0" />
        <path d="M11 22h6v6h-6z" fill="#f6d56e" />
      </svg>
    ),
  },
  {
    icon: (
      <svg viewBox="0 0 28 30" className="h-[30px] w-[28px]">
        <path d="M9 8c0-9 10-9 10 0" fill="none" stroke="#ccc" strokeWidth="1.500" />
        <path d="M1 7h26v23H1z" fill="#fff" />
        <rect x="8" y="12" width="5" height="5" fill="#f25022" />
        <rect x="15" y="12" width="5" height="5" fill="#7fba00" />
        <rect x="8" y="19" width="5" height="5" fill="#00a4ef" />
        <rect x="15" y="19" width="5" height="5" fill="#ffb900" />
      </svg>
    ),
  },
  {
    icon: (
      <svg viewBox="0 0 30 28" className="h-[26px] w-[30px]">
        <path d="M0 11 15 0l15 11v17H0z" fill="#fff" />
        <path d="M5 10h20l-7 8 7 8-11-8z" fill="#0a1633" />
      </svg>
    ),
  },
  { on: true, icon: <FaInternetExplorer className="h-[27px] w-[27px] text-[#3cb6e6]" /> },
  {
    on: true,
    icon: (
      <svg viewBox="0 0 30 32" className="h-[32px] w-[30px]">
        <circle cx="15" cy="18" r="13.500" fill="#3a47c2" />
        <path d="M15 0c2 4 11 7 13 16 1 9-6 16-13 16S2 27 2 18c0-4 1-7 3-9 0 3 1 4 2 5 1-6 5-9 8-14z" fill="#f6771f" />
        <path d="M15 11c5 0 8 4 7 9s-5 7-9 6c-3-1-5-3-5-6 2 2 5 2 7 1 2-2 1-5-3-5 0-2 1-4 3-5z" fill="#ffc331" />
      </svg>
    ),
  },
  { on: true, icon: <Strawberry className="h-[38px] w-[27px]" /> },
  {
    icon: (
      <svg viewBox="0 0 30 34" className="h-[34px] w-[30px]">
        <path d="M2 20C0 11 8 5 16 6c5 1 7 4 6 7-1 2-4 1-5 3-1 3 2 4 1 7s-4 5-8 4-7-3-8-7z" fill="#dfe7f2" />
        <circle cx="9" cy="14" r="2.400" fill="#e23d2a" />
        <circle cx="15" cy="11" r="2.400" fill="#3ea8e0" />
        <circle cx="7" cy="20" r="2.400" fill="#f5c22e" />
        <circle cx="11" cy="25" r="2.400" fill="#47a84a" />
        <path d="M27 1 21 14l-1 8 5-7z" fill="#b98a4e" />
      </svg>
    ),
  },
]

function TrayPrinter() {
  return (
    <svg viewBox="0 0 20 24" className="h-[24px] w-[20px]">
      <path d="M5 7 14 1l4 8-8 9z" fill="#e4e7ea" />
      <path d="M3 11 9 6l8 8-7 7z" fill="#a8aeb6" />
      <path d="M3 16l2 2-2 5H1z" fill="#7d3fb8" />
      <path d="M5 18l2 2-3 3H3z" fill="#e8c93a" />
    </svg>
  )
}

const trayIcons: ReactNode[] = [
  <TrayPrinter key="a" />,
  <svg key="b" viewBox="0 0 20 22" className="h-[22px] w-[20px]">
    <path d="M3 20 11 1l7 10-6 1 2 8-5-6z" fill="#8e959c" />
    <path d="M11 1 7 8l5 3z" fill="#262b32" />
  </svg>,
  <TrayPrinter key="c" />,
  <svg key="d" viewBox="0 0 20 22" className="h-[22px] w-[20px]">
    <rect x="0" y="0" width="20" height="22" rx="2" fill="#c8102e" />
    <path d="M5 4h6c4 0 4 7 0 7H8v7H5zM8 7v2h3c1 0 1-2 0-2zM11 13l4 5h-3l-2-3z" fill="#fff" />
  </svg>,
  <svg key="e" viewBox="0 0 20 26" className="h-[26px] w-[20px]">
    <path d="M10 0 19 3v10c0 6-5 10-9 12C5 23 1 19 1 13V3z" fill="#fff" />
    <path d="M10 0v12H1V3zM10 12h9c0 6-5 10-9 13z" fill="#111" />
    <circle cx="14" cy="19" r="5.500" fill="#2e9a47" />
  </svg>,
  <svg key="f" viewBox="0 0 22 16" className="h-[16px] w-[22px]">
    <path d="M4 16c-5 0-5-6 0-7 1-6 9-9 12-2 6 0 7 9 1 9z" fill="#8a919a" />
  </svg>,
  <svg key="g" viewBox="0 0 22 24" className="h-[24px] w-[22px]">
    <path d="M2 6 14 2l6 4v14H2z" fill="#b4b8bc" />
    <path d="m6 15 4 6L20 4" fill="none" stroke="#4fbf3a" strokeWidth="3.500" />
  </svg>,
  <svg key="h" viewBox="0 0 14 28" className="h-[28px] w-[14px]">
    <path d="M3 1h8v6H3zM1 7h12v15l-3 5H4l-3-5z" fill="none" stroke="#fff" />
    <path d="M5 3h1v2H5zM8 3h1v2H8z" fill="#fff" />
  </svg>,
  <svg key="i" viewBox="0 0 22 20" className="h-[20px] w-[22px]">
    <path d="M4 1v3M7 1v3" stroke="#fff" />
    <rect x="2" y="4" width="18" height="13" fill="#fff" />
    <rect x="4" y="6" width="14" height="8" fill="#111" />
    <path d="M20 8h2v5h-2z" fill="#fff" />
  </svg>,
  <svg key="j" viewBox="0 0 22 22" className="h-[20px] w-[20px]">
    <path d="M2 20C2 10 10 3 20 2M7 20c0-7 5-11 11-12M12 20c0-3 2-6 6-6" fill="none" stroke="#8a94a0" strokeWidth="1.500" />
    <path d="M16 20h3" stroke="#fff" strokeWidth="2" />
  </svg>,
  <svg key="k" viewBox="0 0 24 24" className="h-[24px] w-[22px]">
    <path d="M1 9h4l5-6v18l-5-6H1z" fill="none" stroke="#fff" />
    <path d="M13 8c2 2 2 6 0 8M16 5c3 4 3 10 0 14M19 3c4 5 4 13 0 18" fill="none" stroke="#5f6a78" />
  </svg>,
]

function Taskbar() {
  return (
    <div className="relative flex h-[50px] shrink-0 bg-[#0a1633] text-[14px] text-[#e8e8e8]">
      <div className="-ml-[1px] flex">
        {taskIcons.map((t, i) => (
          <div key={i} className="flex h-full w-[62px] flex-col items-center">
            <div className="flex h-[47px] items-center justify-center">{t.icon}</div>
            {t.on && <div className="h-[3px] w-[51px] bg-[#7fb3e6]" />}
          </div>
        ))}
      </div>
      <div className="ml-auto flex items-center">
        {trayIcons.map((ic, i) => (
          <div key={i} className="flex h-[30px] w-[30px] items-center justify-center">{ic}</div>
        ))}
        <div className="flex w-[94px] flex-col items-center leading-[24px]">
          <div>15:27</div>
          <div>18/02/2019</div>
        </div>
        <div className="flex w-[42px] justify-center">
          <svg viewBox="0 0 20 22" className="h-[22px] w-[20px]">
            <path d="M.5.5h19v16H12l-2 3-2-3H.5z" fill="none" stroke="#fff" />
          </svg>
        </div>
        <div className="w-[21px]" />
      </div>
    </div>
  )
}

export default function App() {
  return (
    <div className="relative flex h-[1080px] w-[1920px] flex-col overflow-hidden bg-[#f0f0f0] font-['Noto_Sans','Liberation_Sans',sans-serif]">
      <TitleBar />
      <MenuBar />
      <TabBar />

      {/* Desktop with its two open windows */}
      <div className="relative flex-1 overflow-hidden">
        <div className="flex gap-x-[87px] pl-[43px] pt-[15px]">
          <People front="#d4472c" back="#3d78c2" hair="#b5612a" hair2="#8e4a1e" />
          <People front="#3d78c2" back="#9a9da2" hair="#b88a2c" hair2="#222" />
          <People front="#8e5a22" back="#47b06a" hair="#222" hair2="#d8b54a" />
          <div className="ml-[6px]"><People front="#3b3b3b" hair="#222" /></div>
        </div>
        <div className="absolute left-[8px] top-[173px] text-[14px] text-[#222]">Ar</div>
        <div className="absolute left-[13px] top-[395px] text-[14px] text-[#222]">C</div>
        <ListWindow />
        <InvoiceWindow />
      </div>

      <StatusBar />
      <Taskbar />
      <Redact className="absolute left-[10px] top-[1006px] h-[30px] w-[192px] border-[5px]" />
    </div>
  )
}
